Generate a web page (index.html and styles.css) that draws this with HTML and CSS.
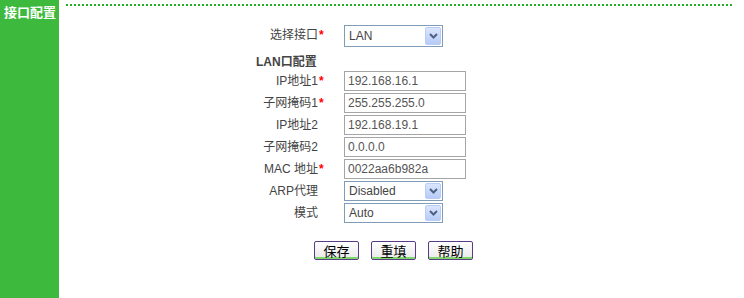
FILE: index.html
```html
<!DOCTYPE html>
<html lang="zh-CN">
<head>
<meta charset="utf-8">
<title>接口配置</title>
<link rel="stylesheet" href="styles.css">
</head>
<body>
<div class="page">
  <aside class="sidebar">
    <div class="side-title">接口配置</div>
  </aside>
  <main class="main">
    <div class="dots"></div>
    <div class="form">
      <div class="grid">
        <div class="label">选择接口</div><div class="star">*</div>
        <div class="field"><div class="select big"><span class="sel-text">LAN</span><span class="arrow"><svg width="9" height="6" viewBox="0 0 9 6"><path d="M1 1 L4.5 4.5 L8 1" fill="none" stroke="#4d6185" stroke-width="2"/></svg></span></div></div>

        <div class="heading">LAN口配置</div>

        <div class="label">IP地址1</div><div class="star">*</div>
        <div class="field"><div class="input">192.168.16.1</div></div>

        <div class="label">子网掩码1</div><div class="star">*</div>
        <div class="field"><div class="input">255.255.255.0</div></div>

        <div class="label">IP地址2</div><div class="star"></div>
        <div class="field"><div class="input">192.168.19.1</div></div>

        <div class="label">子网掩码2</div><div class="star"></div>
        <div class="field"><div class="input">0.0.0.0</div></div>

        <div class="label">MAC 地址</div><div class="star">*</div>
        <div class="field"><div class="input">0022aa6b982a</div></div>

        <div class="label">ARP代理</div><div class="star"></div>
        <div class="field"><div class="select"><span class="sel-text">Disabled</span><span class="arrow"><svg width="9" height="6" viewBox="0 0 9 6"><path d="M1 1 L4.5 4.5 L8 1" fill="none" stroke="#4d6185" stroke-width="2"/></svg></span></div></div>

        <div class="label">模式</div><div class="star"></div>
        <div class="field"><div class="select"><span class="sel-text">Auto</span><span class="arrow"><svg width="9" height="6" viewBox="0 0 9 6"><path d="M1 1 L4.5 4.5 L8 1" fill="none" stroke="#4d6185" stroke-width="2"/></svg></span></div></div>
      </div>
      <div class="buttons">
        <button class="btn">保存</button>
        <button class="btn">重填</button>
        <button class="btn">帮助</button>
      </div>
    </div>
  </main>
</div>
</body>
</html>
```

FILE: styles.css
```css
html, body {
  margin: 0;
  padding: 0;
  background: #fff;
}

body {
  font-family: "Liberation Sans", "Noto Sans CJK SC", sans-serif;
  font-size: 12px;
  color: #444;
}

.page {
  display: flex;
  width: 744px;
  height: 298px;
  overflow: hidden;
}

.sidebar {
  width: 59px;
  flex: 0 0 59px;
  background: #3dba3d;
}

.side-title {
  padding: 4px 0 0 4px;
  font-family: "Noto Sans CJK SC", sans-serif;
  font-weight: bold;
  font-size: 13px;
  line-height: 15px;
  color: #fff;
}

.main {
  flex: 1;
  display: flex;
  flex-direction: column;
}

.dots {
  margin: 4px 0 0 7px;
  width: 667px;
  height: 2px;
  background-image: linear-gradient(to right, #22b022 0 2px, transparent 2px 4px);
  background-size: 4px 2px;
  background-repeat: repeat-x;
}

.form {
  margin: 19px 0 0 197px;
}

.grid {
  display: grid;
  grid-template-columns: 62px 8px 99px;
  grid-template-rows: 22px 20px repeat(7, 20px);
  row-gap: 2px;
  column-gap: 0;
}

.label {
  text-align: right;
  line-height: 20px;
  white-space: nowrap;
  color: #444;
}

.star {
  color: #f00;
  line-height: 20px;
  font-weight: bold;
  padding-left: 1px;
}

.field {
  padding-left: 18px;
}

.heading {
  grid-column: 1 / -1;
  align-self: end;
  font-weight: bold;
  line-height: 14px;
  color: #444;
}

.input {
  box-sizing: border-box;
  width: 122px;
  height: 20px;
  border: 1px solid #a5a5a5;
  padding: 0 3px;
  line-height: 18px;
  color: #555;
  white-space: nowrap;
}

.select {
  box-sizing: border-box;
  width: 99px;
  height: 20px;
  border: 1px solid #7f9db9;
  display: flex;
  align-items: stretch;
  padding: 1px;
  background: #fff;
}

.select.big {
  height: 22px;
}

.sel-text {
  flex: 1;
  padding-left: 3px;
  line-height: 16px;
  color: #444;
  align-self: center;
}

.arrow {
  width: 16px;
  box-sizing: border-box;
  border: 1px solid #b8cdf5;
  border-radius: 2px;
  background: linear-gradient(#dbe6fd, #b7cbf7);
  display: flex;
  align-items: center;
  justify-content: center;
}

.buttons {
  display: flex;
  gap: 12px;
  margin: 18px 0 0 58px;
}

.btn {
  box-sizing: border-box;
  width: 45px;
  height: 19px;
  padding: 0;
  border: 1px solid #5a3b88;
  border-radius: 2px;
  background: linear-gradient(#ffffff, #ededed 80%);
  box-shadow: inset 0 -2px 0 #7fd86a;
  font-family: "Noto Sans CJK SC", sans-serif;
  font-size: 13px;
  line-height: 15px;
  color: #000;
}
```
